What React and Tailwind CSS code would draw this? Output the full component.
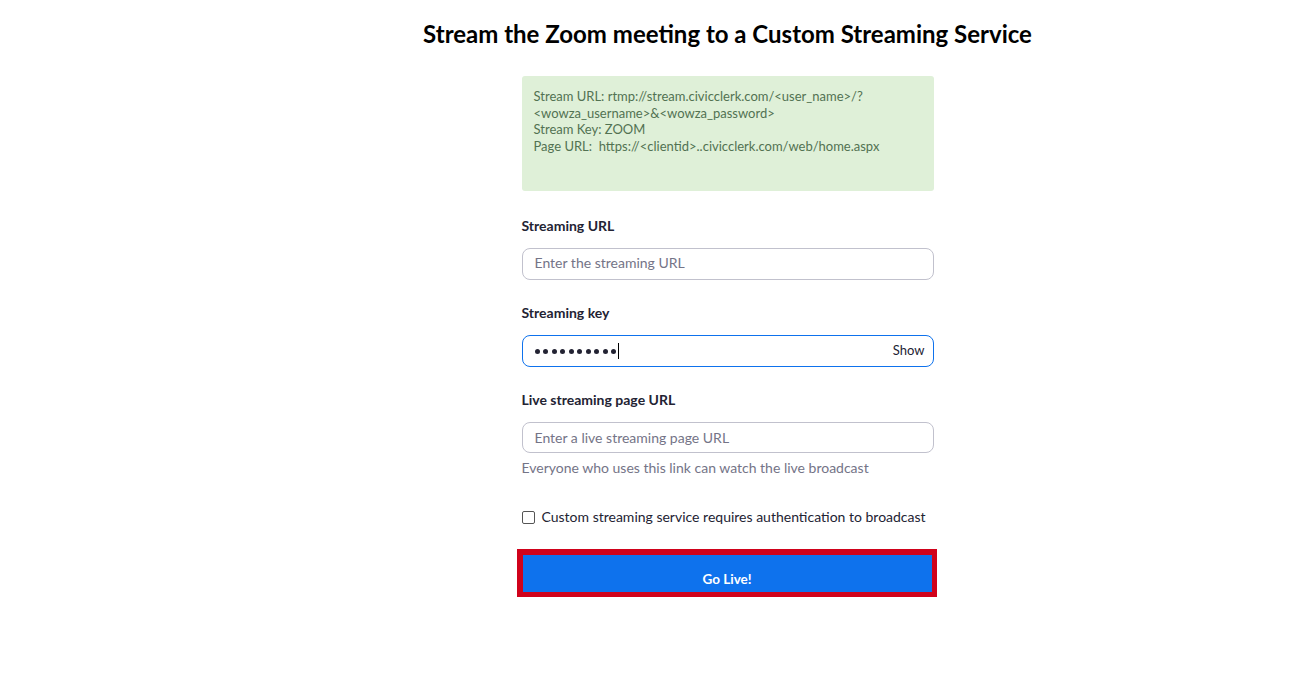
export default function App() {
  const dots = [0, 1, 2, 3, 4, 5, 6, 7, 8, 9];
  return (
    <div className="min-h-screen bg-white font-['Lato','Liberation_Sans',sans-serif] text-[#232333]">
      <div className="flex flex-col items-center pl-[150px] pt-[18px]">
        <h1 className="text-[24px] font-bold leading-[32px] text-black">
          Stream the Zoom meeting to a Custom Streaming Service
        </h1>

        <div className="mt-[26px] w-[412px]">
          <div className="h-[115px] rounded-[3px] bg-[#dff0d8] px-3 pt-[12px] text-[13px] leading-[16.7px] text-[#527252]">
            <div>Stream URL: rtmp://stream.civicclerk.com/&lt;user_name&gt;/?</div>
            <div>&lt;wowza_username&gt;&amp;&lt;wowza_password&gt;</div>
            <div>Stream Key: ZOOM</div>
            <div>Page URL:&nbsp; https://&lt;clientid&gt;..civicclerk.com/web/home.aspx</div>
          </div>

          <label className="mt-[26px] block text-[14px] font-bold leading-[18px]">Streaming URL</label>
          <div className="mt-[13px] flex h-[32px] items-center rounded-[8px] border border-[#c1c1cd] px-3 pb-[3px]">
            <span className="text-[14px] text-[#747487]">Enter the streaming URL</span>
          </div>

          <label className="mt-[24px] block text-[14px] font-bold leading-[18px]">Streaming key</label>
          <div className="mt-[13px] flex h-[32px] items-center justify-between rounded-[8px] border border-[#0e72ed] pl-3 pr-2">
            <div className="flex items-center">
              <div className="flex items-center gap-[3.5px]">
                {dots.map((d) => (
                  <span key={d} className="h-[5px] w-[5px] rounded-full bg-[#232333]"></span>
                ))}
              </div>
              <span className="ml-[2px] h-[16px] w-px bg-black"></span>
            </div>
            <span className="text-[13px] text-[#232333]">Show</span>
          </div>

          <label className="mt-[24px] block text-[14px] font-bold leading-[18px]">Live streaming page URL</label>
          <div className="mt-[13px] flex h-[31px] items-center rounded-[8px] border border-[#c1c1cd] px-3 pb-[1px]">
            <span className="text-[14px] text-[#747487]">Enter a live streaming page URL</span>
          </div>
          <p className="mt-[6px] text-[14px] leading-[18px] text-[#747487]">
            Everyone who uses this link can watch the live broadcast
          </p>

          <div className="mt-[31px] flex items-center gap-[7px]">
            <span className="h-[13px] w-[13px] rounded-[2px] border border-[#555] bg-white"></span>
            <span className="text-[14px] leading-[18px] text-[#232333]">
              Custom streaming service requires authentication to broadcast
            </span>
          </div>

          <div className="-ml-[5px] mt-[23px] w-[420px] border-[6px] border-b-[5px] border-r-[5px] border-[#d0021b]">
            <button className="flex h-[37px] w-full items-end justify-center bg-[#0e72ed] pb-[3px] text-[13.5px] font-bold text-white">
              Go Live!
            </button>
          </div>
        </div>
      </div>
    </div>
  );
}
